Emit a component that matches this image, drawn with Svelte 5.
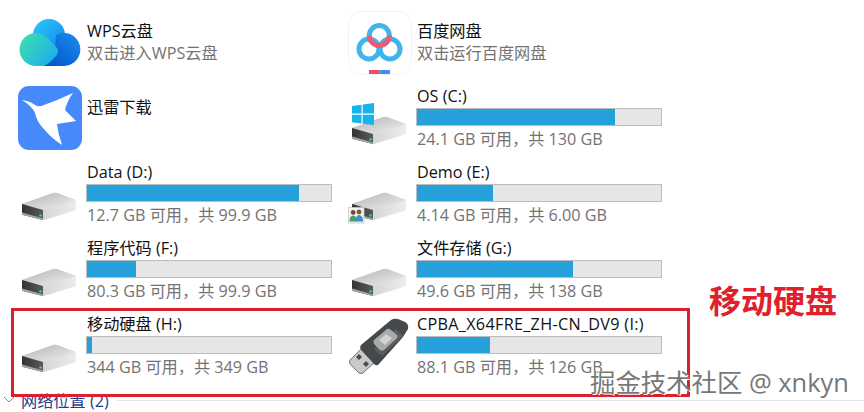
<script>
  const row1 = [
    { name: 'Data (D:)', free: '12.7 GB 可用，共 99.9 GB', pct: 87, icon: 'hdd' },
    { name: 'Demo (E:)', free: '4.14 GB 可用，共 6.00 GB', pct: 31, icon: 'share' },
    { name: '程序代码 (F:)', free: '80.3 GB 可用，共 99.9 GB', pct: 20, icon: 'hdd' },
    { name: '文件存储 (G:)', free: '49.6 GB 可用，共 138 GB', pct: 64, icon: 'hdd' },
    { name: '移动硬盘 (H:)', free: '344 GB 可用，共 349 GB', pct: 2, icon: 'hdd' },
    { name: 'CPBA_X64FRE_ZH-CN_DV9 (I:)', free: '88.1 GB 可用，共 126 GB', pct: 30, icon: 'usb', wide: true }
  ];
</script>

{#snippet hdd(extra)}
  <svg class="hdd" width="58" height="56" viewBox="0 -26 58 56">
    <defs>
      <linearGradient id="top" x1="0" y1="0" x2="1" y2="1"><stop offset="0" stop-color="#b4b4b4"/><stop offset="1" stop-color="#f0f0f0"/></linearGradient>
      <linearGradient id="side" x1="0" y1="0" x2="1" y2="0"><stop offset="0" stop-color="#c8c8c8"/><stop offset="1" stop-color="#ececec"/></linearGradient>
      <linearGradient id="front" x1="0" y1="0" x2="1" y2="0"><stop offset="0" stop-color="#333"/><stop offset="1" stop-color="#5a5a5a"/></linearGradient>
    </defs>
    <path d="M0 11 L31 0 Q33 -.5 35 0 L54 7 V16 Q54 17 53 17.500 L22 27 Q21 27.300 20 27 L1 22 Q0 21.500 0 21 Z" fill="url(#side)"/>
    <path d="M0 11 L31 0 Q33 -.5 35 0 L54 7 L21.500 17 Q20.500 17.200 19.500 17 Z" fill="url(#top)"/>
    <path d="M0 11 L21 17 V27 L1 22 Q0 21.500 0 21 Z" fill="url(#front)"/>
    <path d="M0 19.500 L21 25.500 V27 L1 22 Q0 21.500 0 21 Z" fill="#a8a8a8"/>
    <circle cx="18.500" cy="22.500" r="1.300" fill="#46d65a"/>
    {#if extra === 'win'}
      <path d="M0 -11 L9.500 -12.300 V-3.500 H0 Z M10.700 -12.500 L22 -14 V-3.500 H10.700 Z M0 -2.300 H9.500 V6.500 L0 5.300 Z M10.700 -2.300 H22 V8 L10.700 6.700 Z" fill="#16b4ea"/>
    {/if}
    {#if extra === 'share'}
      <rect x="-3.500" y="14.500" width="15.500" height="15.500" fill="#f4f3ea" stroke="#c8c8c8" stroke-width=".8"/>
      <circle cx="1.200" cy="19.500" r="2.400" fill="#6a5238"/>
      <circle cx="7" cy="19" r="2.400" fill="#75593c"/>
      <path d="M-2.500 28.500 Q-2.500 22.500 1.200 22.500 Q4.500 22.500 4.500 28.500 Z" fill="#4d9a6a"/>
      <path d="M3.500 28.500 Q3.500 22 7 22 Q11 22 11 28.500 Z" fill="#3f8fcb"/>
    {/if}
  </svg>
{/snippet}

{#snippet usb()}
  <svg class="usb" width="60" height="56" viewBox="0 0 60 56">
    <path d="M1 42 L14 29 L27 43 L14 55 Q12 56 10 55 L1 46 Q0 44 1 42 Z" fill="#c9c9c9" stroke="#777" stroke-width="1"/>
    <path d="M7 39 l3 -3 3 3 -3 3 Z M14 46 l3 -3 3 3 -3 3 Z" fill="#4a4a4a"/>
    <path d="M12 27 L42 2 Q45 0 49 1 L56 4 Q60 6 59 11 L54 19 L29 47 Q27 48 25 46 L13 33 Q10 30 12 27 Z" fill="#46494b"/>
    <path d="M35 21 L46 12 Q48 11 49 13 L54 18 L34 37 Q32 38 30 36 L25 31 Z" fill="#5a5d5f"/>
    <path d="M25 22 L38 11 Q40 10 42 12 L48 17 Q49 19 48 20 L35 32 Q33 33 31 32 L25 26 Q24 24 25 22 Z" fill="#a9abab"/>
    <path d="M30 22 L37 16 L43 20 L36 27 Z" fill="#d3d3d3"/>
  </svg>
{/snippet}

<main class="page">
  <div class="grid">
    <div class="tile app">
      <div class="icon">
        <svg class="wps" width="62" height="47" viewBox="0 0 62 47">
          <defs>
            <linearGradient id="cT" x1="0" y1="0" x2="1" y2="1"><stop offset="0" stop-color="#2bc8fb"/><stop offset="1" stop-color="#1285f0"/></linearGradient>
            <linearGradient id="cR" x1="0" y1="1" x2="1" y2="0"><stop offset="0" stop-color="#0350c4"/><stop offset="1" stop-color="#1a8ef0"/></linearGradient>
            <linearGradient id="cL" x1="0" y1="0" x2="1" y2="0.600"><stop offset="0" stop-color="#3ee2a8"/><stop offset="1" stop-color="#20b0ec"/></linearGradient>
          </defs>
          <circle cx="30" cy="16" r="16" fill="url(#cT)"/>
          <path d="M24 47 H45 A16.500 16.500 0 1 0 37 16 L36 30 Z" fill="url(#cR)"/>
          <path d="M17 14 C26 14 31 21 38 29 Q41 33 36 38 L30 44 Q27 47 23 47 H17 A16.500 16.500 0 0 1 17 14 Z" fill="url(#cL)"/>
        </svg>
      </div>
      <div class="body">
        <div class="title">WPS云盘</div>
        <div class="sub tight">双击进入WPS云盘</div>
      </div>
    </div>
    <div class="tile app">
      <div class="icon">
        <svg class="baidu" width="64" height="64" viewBox="0 0 64 64">
          <rect x=".5" y=".5" width="63" height="63" rx="13" fill="#fff" stroke="#f3f3f3"/>
          <circle cx="21" cy="38" r="10" fill="none" stroke="#3db5ee" stroke-width="5"/>
          <circle cx="42" cy="38" r="10" fill="none" stroke="#3db5ee" stroke-width="5"/>
          <circle cx="31.300" cy="24.500" r="10" fill="none" stroke="#3db5ee" stroke-width="5"/>
          <path d="M21.300 24.500 A10 10 0 0 0 41.300 24.500" fill="none" stroke="#ee5a72" stroke-width="5"/>
          <rect x="21" y="59" width="10.500" height="4" fill="#ee4d6c"/>
          <rect x="31.500" y="59" width="10.500" height="4" fill="#3a8ff0"/>
        </svg>
      </div>
      <div class="body">
        <div class="title">百度网盘</div>
        <div class="sub tight">双击运行百度网盘</div>
      </div>
    </div>
    <div class="tile app">
      <div class="icon">
        <svg class="thunder" width="64" height="64" viewBox="0 0 64 64">
          <rect width="64" height="64" rx="11" fill="#4589fb"/>
          <path d="M4 14 Q12 15 17 19 Q21 21.500 26 19 Q40 14 55 7 Q49 15 47 24 L58 35 L39 38 Q40 48 44 59 Q33 52 25 42 Q19 36 17 27 Q14 20 4 14 Z" fill="#fff"/>
        </svg>
      </div>
      <div class="body"><div class="title">迅雷下载</div></div>
    </div>
    <div class="tile">
      <div class="icon">{@render hdd('win')}</div>
      <div class="body">
        <div class="title">OS (C:)</div>
        <div class="bar"><div class="fill" style="width:{81}%"></div></div>
        <div class="sub">24.1 GB 可用，共 130 GB</div>
      </div>
    </div>
    {#each row1 as d}
      <div class="tile">
        <div class="icon">
          {#if d.icon === 'usb'}{@render usb()}{:else}{@render hdd(d.icon)}{/if}
        </div>
        <div class="body">
          <div class="title" class:wide={d.wide}>{d.name}</div>
          <div class="bar"><div class="fill" style="width:{d.pct}%"></div></div>
          <div class="sub">{d.free}</div>
        </div>
      </div>
    {/each}
  </div>

  <div class="section">
    <svg width="12" height="8" viewBox="0 0 12 8"><path d="M1 1 L6 6 L11 1" fill="none" stroke="#8a8a8a"/></svg>
    <span class="section-name">网络位置 (2)</span>
    <span class="rule"></span>
  </div>

  <div class="redbox"></div>
  <div class="note">移动硬盘</div>
  <div class="mark">掘金技术社区 @ xnkyn</div>
</main>

<style>
  :global(body) { margin: 0; background: #fff; overflow: hidden; }
  .page {
    position: relative;
    width: 864px;
    height: 412px;
    overflow: hidden;
    padding-top: 8px;
    box-sizing: border-box;
    font-family: "Open Sans", "Noto Sans CJK SC", sans-serif;
    color: #111;
    background: #fff;
  }
  .grid { display: grid; grid-template-columns: 330px 330px; grid-auto-rows: 76px; }
  .tile { display: flex; align-items: flex-start; }
  .icon { width: 86px; height: 76px; flex: none; }
  .icon svg { display: block; overflow: visible; }
  .body { width: 246px; flex: none; }
  .title { font-size: 16.200px; line-height: 24px; white-space: nowrap; padding-left: 1px; }
  .title.wide { letter-spacing: .3px; }
  .app .body { padding-top: 11px; }
  .sub { font-size: 16.200px; line-height: 24px; margin-top: 1px; padding-left: 1px; color: #737373; white-space: nowrap; }
  .sub.tight { margin-top: -2px; }
  .bar { height: 18px; box-sizing: border-box; background: #e6e6e6; border: 1px solid #bcbcbc; }
  .fill { height: 100%; background: #26a0da; margin: 0; }
  .hdd { margin: 7px 0 0 22px; }
  .usb { margin: 6px 0 0 19px; }
  .wps { margin: 11px 0 0 19px; }
  .baidu { margin: 3px 0 0 18px; }
  .thunder { margin: 2px 0 0 18px; }
  .section { display: flex; align-items: center; height: 24px; color: #1f3f8f; }
  .section svg { margin: 0 6px 0 3px; }
  .section-name { font-size: 16.200px; white-space: nowrap; }
  .rule { flex: 1; height: 1px; background: #e2e2e2; margin: 0 0 0 8px; }
  .redbox {
    position: absolute;
    left: 11px; top: 308px;
    width: 679px; height: 89px;
    box-sizing: border-box;
    border: 3px solid #d9202c;
  }
  .note {
    position: absolute;
    left: 709px; top: 278px;
    font: 700 32px/42px "Noto Sans CJK SC", sans-serif;
    color: #e0202c;
    white-space: nowrap;
  }
  .mark {
    position: absolute;
    left: 590px; top: 366px;
    font-size: 25.400px;
    line-height: 32px;
    color: #777;
    text-shadow: 1px 1px 0 #fff, -1px 0 0 #fff;
    white-space: nowrap;
  }
</style>
